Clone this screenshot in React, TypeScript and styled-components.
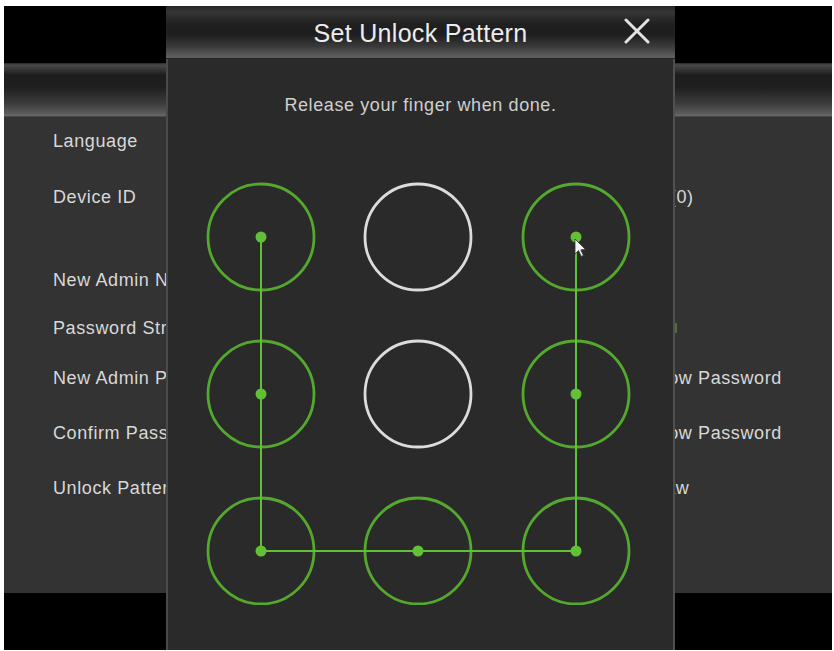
import React from "react";
import styled, { createGlobalStyle } from "styled-components";

const GlobalStyle = createGlobalStyle`
  html, body {
    margin: 0;
    padding: 0;
    background: #fff;
  }
  body {
    font-family: "Liberation Sans", Arial, sans-serif;
  }
`;

const Frame = styled.div`
  width: 834px;
  height: 651px;
  box-sizing: border-box;
  padding: 6px 2px 1px 4px;
  background: #fff;
  overflow: hidden;
`;

const Screen = styled.div`
  position: relative;
  height: 100%;
  display: flex;
  flex-direction: column;
  background: #333333;
  overflow: hidden;
`;

const BlackBar = styled.div<{ $h: number }>`
  height: ${({ $h }) => $h}px;
  flex: none;
  background: #000;
`;

const HeaderBand = styled.div`
  height: 54px;
  flex: none;
  background: linear-gradient(
    to bottom,
    #2a2a2a 0%,
    #4a4a4a 4%,
    #1d1d1d 22%,
    #1f1f1f 45%,
    #3c3c3c 75%,
    #5c5c5c 94%,
    #6a6a6a 97%,
    #3a3a3a 100%
  );
`;

const Panel = styled.div`
  flex: 1;
  display: flex;
  flex-direction: column;
`;

const Row = styled.div<{ $h: number }>`
  height: ${({ $h }) => $h}px;
  display: grid;
  grid-template-columns: 592px 1fr;
  align-items: center;
  padding-left: 49px;
  color: #d8d8d8;
  font-size: 18px;
  letter-spacing: 0.6px;
  white-space: nowrap;
`;

const Strength = styled.div`
  width: 32px;
  height: 10px;
  background: #4f6e3a;
`;

const Dialog = styled.div`
  position: absolute;
  top: 0;
  bottom: 0;
  left: 162px;
  width: 509px;
  display: flex;
  flex-direction: column;
  background: #2a2a2a;
  box-shadow: inset 2px 0 0 #4a4a4a, inset -2px 0 0 #505050;
`;

const TitleBar = styled.div`
  position: relative;
  height: 52px;
  flex: none;
  display: flex;
  align-items: center;
  justify-content: center;
  background: linear-gradient(
    to bottom,
    #262626 0%,
    #353535 12%,
    #202020 35%,
    #1e1e1e 55%,
    #3a3a3a 78%,
    #585858 94%,
    #626262 100%
  );
  border-bottom: 1px solid #222;
`;

const Title = styled.div`
  color: #ececec;
  font-size: 25px;
  letter-spacing: 0.3px;
  margin-top: 2px;
`;

const CloseButton = styled.button`
  position: absolute;
  right: 24px;
  top: 11px;
  width: 28px;
  height: 28px;
  padding: 0;
  border: none;
  background: none;
  color: #e2e2e2;
  display: flex;
  align-items: center;
  justify-content: center;
`;

const Body = styled.div`
  flex: 1;
  display: flex;
  flex-direction: column;
  align-items: center;
`;

const Hint = styled.div`
  padding-top: 36px;
  line-height: 20px;
  color: #cfcfcf;
  font-size: 18px;
  letter-spacing: 0.6px;
`;

const Pad = styled.svg`
  display: block;
  margin-top: 10px;
  flex: none;
`;

const GREEN_RING = "#54a82d";
const GREEN_LINE = "#62c036";

const cols = [95, 252, 410];
const rows = [112, 269, 426];

type Cell = { c: number; r: number };

const path: Cell[] = [
  { c: 0, r: 0 },
  { c: 0, r: 1 },
  { c: 0, r: 2 },
  { c: 1, r: 2 },
  { c: 2, r: 2 },
  { c: 2, r: 1 },
  { c: 2, r: 0 },
];

const isActive = (c: number, r: number) =>
  path.some((p) => p.c === c && p.r === r);

const formRows: { h: number; label: string; value?: React.ReactNode }[] = [
  { h: 48, label: "Language" },
  { h: 64, label: "Device ID", value: "ID (0)" },
  { h: 27, label: "" },
  { h: 48, label: "New Admin Name" },
  { h: 48, label: "Password Strength", value: <Strength /> },
  { h: 52, label: "New Admin Password", value: "Show Password" },
  { h: 58, label: "Confirm Password", value: "Show Password" },
  { h: 52, label: "Unlock Pattern", value: "Draw" },
];

const PatternPad: React.FC = () => {
  const pts = path.map((p) => `${cols[p.c]},${rows[p.r]}`).join(" ");
  return (
    <Pad width={509} height={480} viewBox="0 0 509 480">
      {rows.map((y, r) =>
        cols.map((x, c) => (
          <circle
            key={`${r}-${c}`}
            cx={x}
            cy={y}
            r={53}
            fill="none"
            stroke={isActive(c, r) ? GREEN_RING : "#dcdcdc"}
            strokeWidth={2.8}
          />
        ))
      )}
      <polyline
        points={pts}
        fill="none"
        stroke={GREEN_LINE}
        strokeWidth={2}
        strokeLinejoin="miter"
      />
      {path.map((p, i) => (
        <circle
          key={i}
          cx={cols[p.c]}
          cy={rows[p.r]}
          r={5.5}
          fill={GREEN_LINE}
        />
      ))}
      <path
        transform={`translate(${cols[2] - 1}, ${rows[0] + 2})`}
        d="M0 0 L0 15 L3.6 11.6 L6.2 17.4 L8.4 16.4 L5.8 10.8 L10.6 10.6 Z"
        fill="#f4f4f4"
        stroke="#333"
        strokeWidth={0.8}
      />
    </Pad>
  );
};

const App: React.FC = () => (
  <>
    <GlobalStyle />
    <Frame>
      <Screen>
        <BlackBar $h={57} />
        <HeaderBand />
        <Panel>
          {formRows.map((row, i) => (
            <Row key={i} $h={row.h}>
              <span>{row.label}</span>
              <span>{row.value}</span>
            </Row>
          ))}
        </Panel>
        <BlackBar $h={57} />
        <Dialog>
          <TitleBar>
            <Title>Set Unlock Pattern</Title>
            <CloseButton aria-label="Close">
              <svg width="26" height="26" viewBox="0 0 26 26">
                <path
                  d="M2 2 L24 24 M24 2 L2 24"
                  stroke="currentColor"
                  strokeWidth="3"
                  strokeLinecap="round"
                />
              </svg>
            </CloseButton>
          </TitleBar>
          <Body>
            <Hint>Release your finger when done.</Hint>
            <PatternPad />
          </Body>
        </Dialog>
      </Screen>
    </Frame>
  </>
);

export default App;
